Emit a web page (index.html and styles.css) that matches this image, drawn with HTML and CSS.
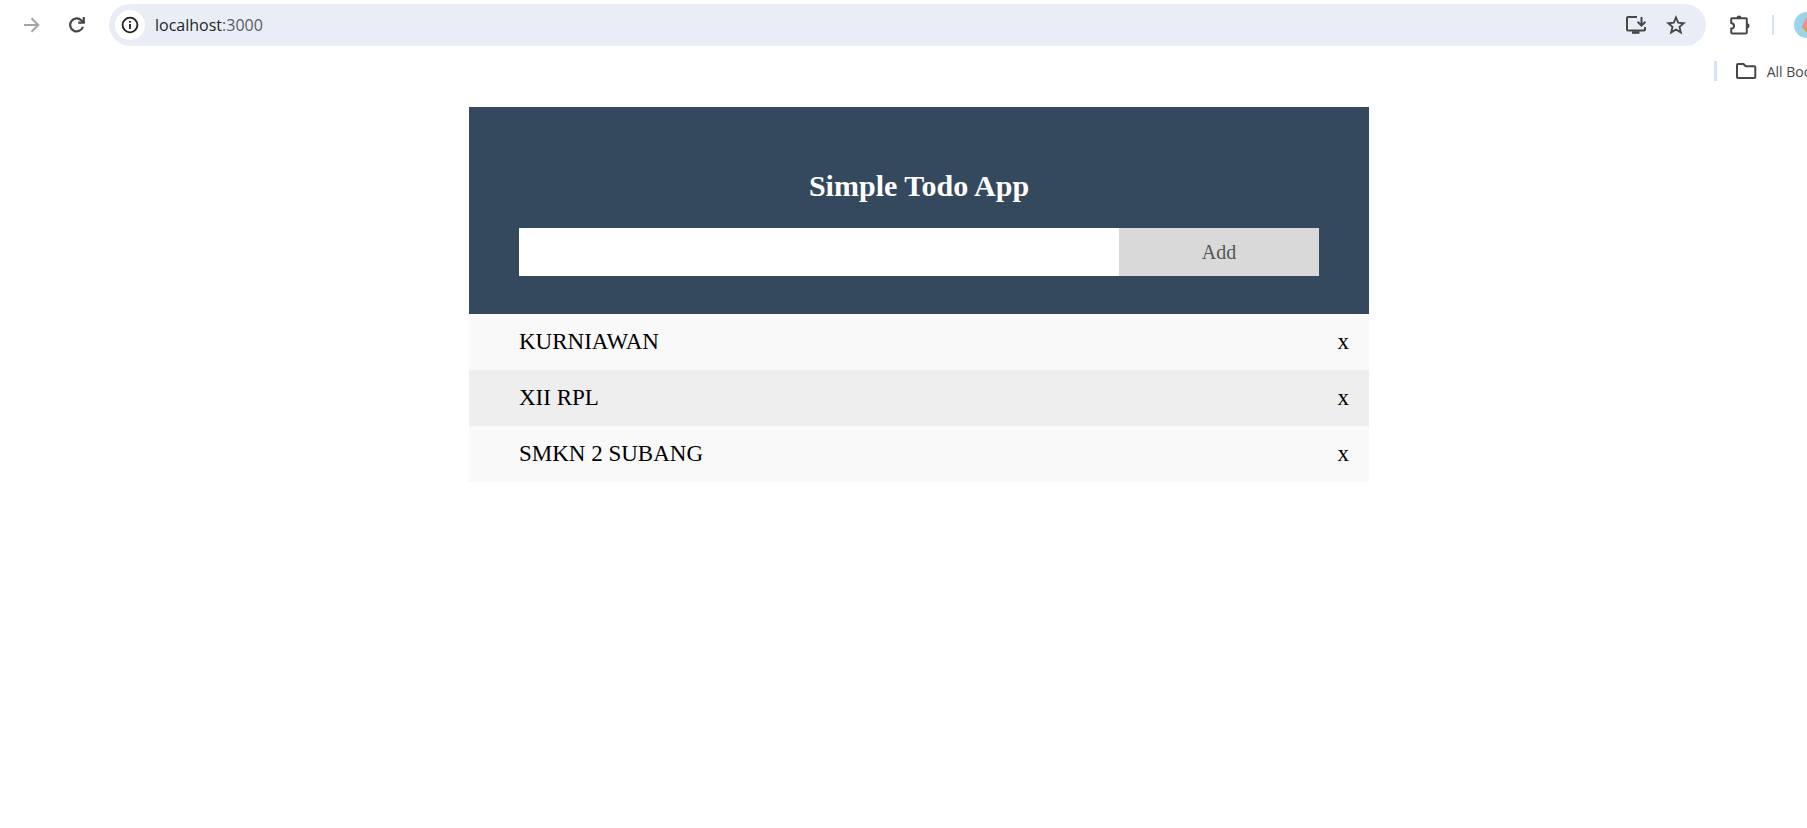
FILE: index.html
```html
<!DOCTYPE html>
<html lang="en">
<head>
<meta charset="utf-8">
<title>Simple Todo App</title>
<link rel="stylesheet" href="styles.css">
</head>
<body>
<header class="browser">
  <div class="toolbar">
    <button class="icon-btn forward" aria-label="Forward"><svg width="16" height="16" viewBox="0 0 16 16" fill="none" stroke="#a3a4a4" stroke-width="2"><path d="M0 8h14M7.500 1.200 14.300 8l-6.800 6.800"/></svg></button>
    <button class="icon-btn reload" aria-label="Reload"><svg width="16" height="16" viewBox="0 0 16 16" fill="none" stroke="#474747" stroke-width="2.200"><path d="M13.900 9.800A6.500 6.500 0 1 1 12.300 3.300L14.400 5.400"/><path d="M14.800 0v5.700H9.200"/></svg></button>
    <div class="omnibox">
      <button class="site-info" aria-label="Site information"><svg width="18" height="18" viewBox="0 0 18 18"><circle cx="9" cy="9" r="7.400" fill="none" stroke="#1f1f1f" stroke-width="1.800"/><path fill="#1f1f1f" d="M8.100 8h1.800v5H8.100zM8.100 5h1.800v1.800H8.100z"/></svg></button>
      <a class="address" href="#">localhost<span class="port">:3000</span></a>
      <button class="icon-btn install" aria-label="Install app"><svg width="22" height="20" viewBox="0 0 22 20" fill="none" stroke="#474747" stroke-width="2"><path d="M12 2H3Q2 2 2 3v11.500q0 1 1 1H19q1 0 1-1V12"/><path d="M7 17.500h7.500" stroke-width="2.600"/><path d="M16.500 2v8M12.600 6.800l3.900 3.900 3.900-3.900"/></svg></button>
      <button class="icon-btn" aria-label="Bookmark this tab"><svg width="20" height="20" viewBox="0 0 20 20" fill="none" stroke="#474747" stroke-width="1.900"><path d="m10 2.500 2.200 5.200 5.600.5-4.300 3.700 1.300 5.500-4.800-2.900-4.800 2.900 1.300-5.500-4.300-3.700 5.600-.5z"/></svg></button>
    </div>
    <button class="icon-btn extensions" aria-label="Extensions"><svg width="22" height="22" viewBox="0 0 22 22"><path d="M3 4.300h14q.8 0 .8.800v13.500q0 .8-.8.800H3q-.8 0-.8-.8v-3.900q2.800-.4 2.800-2.800T2.200 9V5.100q0-.8.800-.8z" fill="none" stroke="#474747" stroke-width="2"/><path fill="#474747" d="M7.500 4a2.500 2.500 0 0 1 5 0zM18 9.300a2.500 2.500 0 0 1 0 5z"/></svg></button>
    <span class="divider thin"></span>
    <button class="avatar" aria-label="Profile"><svg width="26" height="26" viewBox="0 0 26 26"><circle cx="13" cy="13" r="13" fill="#9bd3e8"/><path fill="#f08d92" d="M14 3q-3 5-6 11l1 3h10V3z"/><path fill="#dfa53a" d="M9 16h9v4h-6z"/></svg></button>
  </div>
  <nav class="bookmarks">
    <span class="divider"></span>
    <a class="folder" href="#"><svg width="22" height="18" viewBox="0 0 22 18" fill="none" stroke="#474747" stroke-width="2"><path d="M3 2h5.500l2.200 2.300h8.600q1 0 1 1V15q0 1-1 1H3q-1 0-1-1V3q0-1 1-1z"/></svg><span>All Bookmarks</span></a>
  </nav>
</header>
<main class="page">
  <section class="todo">
    <form class="entry" onsubmit="return false">
      <h1 class="title">Simple Todo App</h1>
      <div class="fields">
        <input class="task" type="text" aria-label="New task">
        <button class="add" type="submit">Add</button>
      </div>
    </form>
    <ul class="list">
      <li class="item"><span>KURNIAWAN</span><button class="remove" aria-label="Remove KURNIAWAN">x</button></li>
      <li class="item"><span>XII RPL</span><button class="remove" aria-label="Remove XII RPL">x</button></li>
      <li class="item"><span>SMKN 2 SUBANG</span><button class="remove" aria-label="Remove SMKN 2 SUBANG">x</button></li>
    </ul>
  </section>
</main>
</body>
</html>
```
FILE: styles.css
```css
* { box-sizing: border-box; }
body {
  margin: 0;
  background: #fff;
  color: #000;
  font-family: "Liberation Serif", "Times New Roman", serif;
  overflow-x: hidden;
}
button {
  margin: 0;
  padding: 0;
  border: 0;
  background: none;
  color: inherit;
  font: inherit;
  cursor: pointer;
}
svg { display: block; flex: none; }

.browser {
  overflow: hidden;
  font-family: "Open Sans", "Noto Sans", sans-serif;
}
.toolbar {
  display: flex;
  align-items: center;
  height: 50px;
  padding-left: 24px;
  margin-right: -13px;
}
.icon-btn { flex: none; }
.reload { margin: 0 24px 0 29px; }
.omnibox {
  flex: 1;
  display: flex;
  align-items: center;
  height: 42px;
  padding: 0 20px 0 6px;
  border-radius: 21px;
  background: #e9eef6;
}
.site-info {
  display: grid;
  place-items: center;
  width: 30px;
  height: 30px;
  border-radius: 50%;
  background: #fff;
}
.address {
  flex: 1;
  margin-left: 10px;
  color: #1f1f1f;
  font-size: 16px;
  text-decoration: none;
}
.port { color: #5a5d61; }
.install { margin-right: 19px; }
.extensions { margin: 0 21px 0 23px; }
.divider {
  width: 3px;
  height: 20px;
  background: #d3e3fd;
}
.thin { width: 2px; }
.avatar { margin-left: 20px; }
.bookmarks {
  display: flex;
  justify-content: flex-end;
  align-items: center;
  gap: 18px;
  height: 42px;
  margin-right: -53px;
}
.folder {
  display: flex;
  align-items: center;
  gap: 10px;
  color: #474747;
  font-size: 14px;
  text-decoration: none;
  white-space: nowrap;
}

.page {
  padding: 15px 0 0 31px;
}
.todo {
  max-width: 900px;
  margin: 0 auto;
}
.entry {
  padding: 60px 50px 38px;
  background: #34495e;
}
.title {
  margin: 0 0 24px;
  color: #fff;
  font-size: 30px;
  line-height: 37px;
  text-align: center;
}
.fields {
  display: grid;
  grid-template-columns: 3fr 1fr;
}
.task {
  min-width: 0;
  height: 48px;
  padding: 12px;
  border: 0;
  border-radius: 0;
  background: #fff;
  font: inherit;
  font-size: 20px;
}
.add {
  background: #d9d9d9;
  color: #555;
  font-size: 20px;
}
.list {
  margin: 0;
  padding: 0;
  list-style: none;
}
.item {
  display: flex;
  justify-content: space-between;
  align-items: center;
  height: 56px;
  padding: 0 20px 0 50px;
  background: #f9f9f9;
  font-size: 23px;
}
.item:nth-child(even) { background: #eee; }
```
